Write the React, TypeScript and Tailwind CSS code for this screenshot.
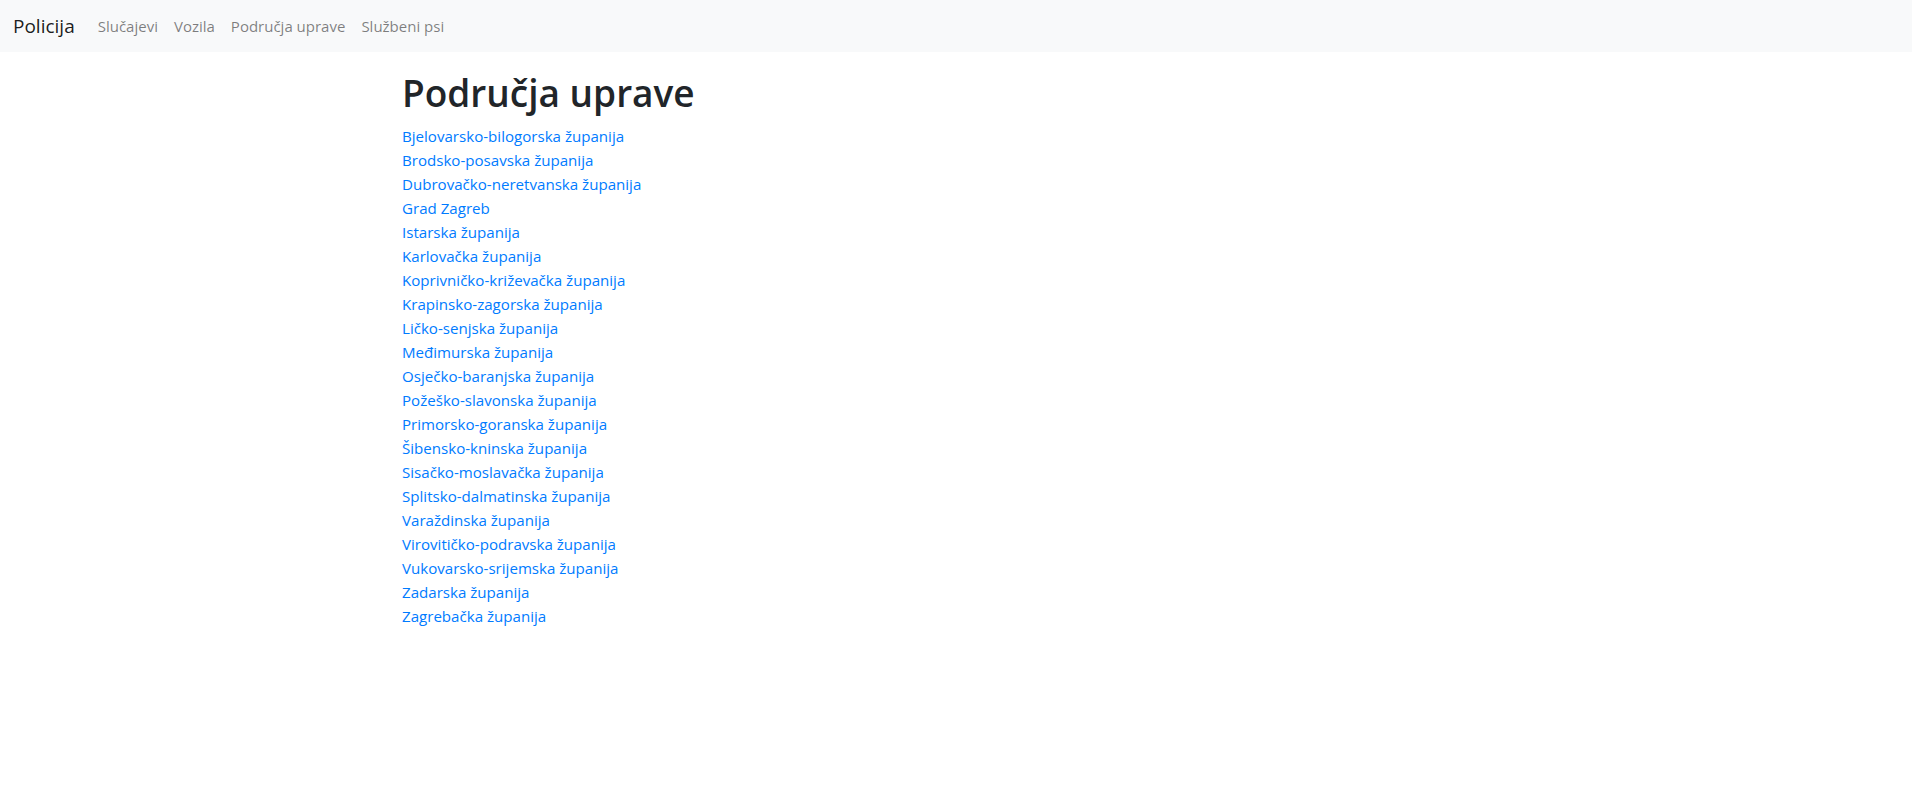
import React from "react";

const zupanije = [
  "Bjelovarsko-bilogorska županija",
  "Brodsko-posavska županija",
  "Dubrovačko-neretvanska županija",
  "Grad Zagreb",
  "Istarska županija",
  "Karlovačka županija",
  "Koprivničko-križevačka županija",
  "Krapinsko-zagorska županija",
  "Ličko-senjska županija",
  "Međimurska županija",
  "Osječko-baranjska županija",
  "Požeško-slavonska županija",
  "Primorsko-goranska županija",
  "Šibensko-kninska županija",
  "Sisačko-moslavačka županija",
  "Splitsko-dalmatinska županija",
  "Varaždinska županija",
  "Virovitičko-podravska županija",
  "Vukovarsko-srijemska županija",
  "Zadarska županija",
  "Zagrebačka županija",
];

const App: React.FC = () => {
  return (
    <div className="min-h-screen bg-white font-['Open_Sans',sans-serif] text-[#212529]">
      <nav className="flex h-[52px] items-center bg-[#f8f9fa] px-[13px]">
        <a href="#" className="mr-[23px] text-[19px] text-black/90">
          Policija
        </a>
        <div className="flex gap-[16px] text-[15px] text-black/50">
          <a href="#">Slučajevi</a>
          <a href="#">Vozila</a>
          <a href="#">Područja uprave</a>
          <a href="#">Službeni psi</a>
        </div>
      </nav>
      <main className="mx-auto w-[1140px] px-[16px]">
        <h1 className="mt-[17px] mb-[7px] text-[37px] leading-[48px] font-semibold">
          Područja uprave
        </h1>
        <ul>
          {zupanije.map((z) => (
            <li key={z} className="text-[15.1px] leading-[24px]">
              <a href="#" className="text-[#007bff] hover:underline">
                {z}
              </a>
            </li>
          ))}
        </ul>
      </main>
    </div>
  );
};

export default App;
